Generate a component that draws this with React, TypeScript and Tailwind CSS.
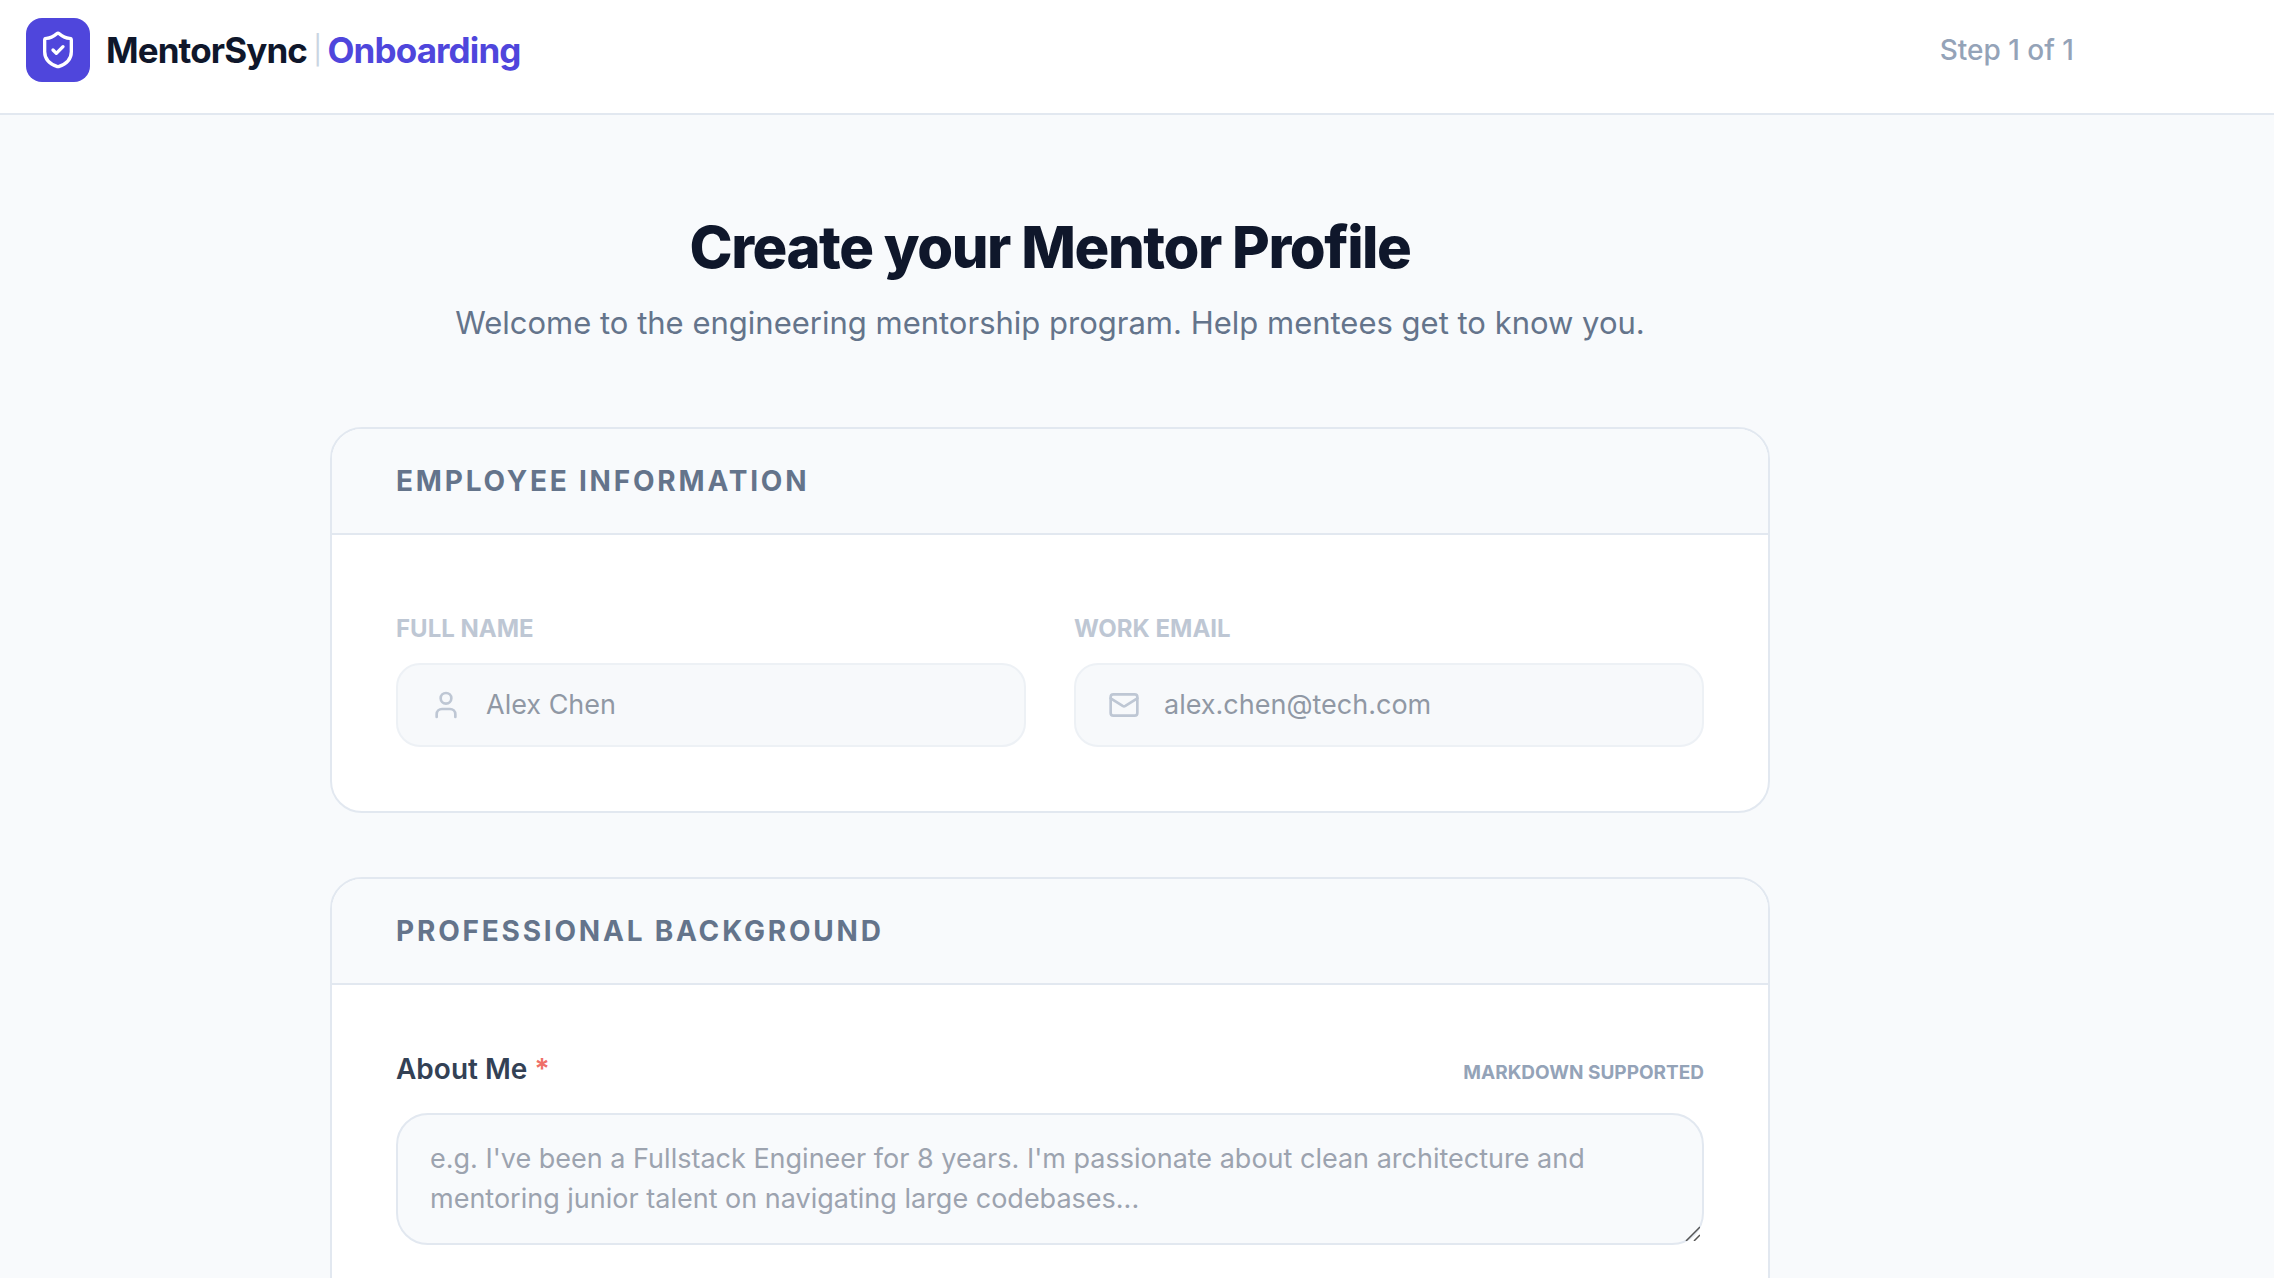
import type { ReactNode } from "react";
import { Mail, ShieldCheck, User } from "lucide-react";

function Section({ title, children }: { title: string; children: ReactNode }) {
  return (
    <section className="overflow-hidden rounded-[32px] border-2 border-slate-200 bg-white">
      <div className="border-b-2 border-slate-200 bg-slate-50 px-16 py-8">
        <h2 className="text-[28px] leading-10 font-bold tracking-widest text-[#64748b] uppercase">{title}</h2>
      </div>
      <div className="p-16">{children}</div>
    </section>
  );
}

function LockedField({ id, label, value, type, icon }: {
  id: string;
  label: string;
  value: string;
  type: string;
  icon: ReactNode;
}) {
  return (
    <div className="opacity-60">
      <label htmlFor={id} className="mb-3 block pt-2 text-2xl leading-11 font-bold text-[#94a3b8] uppercase">
        {label}
      </label>
      <div className="relative">
        <span className="pointer-events-none absolute inset-y-0 left-0 flex items-center pl-[34px] text-[#94a3b8]">
          {icon}
        </span>
        <input
          id={id}
          type={type}
          value={value}
          readOnly
          className="block w-full rounded-3xl border-2 border-slate-200 bg-slate-100/90 py-5 pr-8 pl-22 text-[27px] leading-10 text-[#475569]"
        />
      </div>
    </div>
  );
}

export default function App() {
  return (
    <div className="min-h-screen bg-slate-50 font-['Inter',sans-serif] text-slate-900">
      <header className="border-b-2 border-slate-200 bg-white pr-[174px]">
        <div className="mx-auto flex max-w-[2048px] items-center justify-between pt-[18px] pb-[31px]">
          <div className="flex items-center gap-4">
            <div className="flex size-16 items-center justify-center rounded-2xl bg-[#4f46dc] text-white">
              <ShieldCheck className="size-10" />
            </div>
            <div className="flex items-center gap-1.5 text-[35px] leading-12 font-bold tracking-tight">
              <span>MentorSync</span>
              <span className="text-[28px] font-normal text-slate-300">|</span>
              <span className="text-[#4f46dc]">Onboarding</span>
            </div>
          </div>
          <span className="text-[28px] leading-10 font-medium text-[#94a3b8]">Step 1 of 1</span>
        </div>
      </header>

      <main className="pr-[174px]">
        <div className="mx-auto max-w-[1440px] pt-24 pb-24">
          <div className="mb-20 text-center">
            <h1 className="mb-4 text-[58px] leading-[72px] font-extrabold tracking-tight">Create your Mentor Profile</h1>
            <p className="text-[31px] leading-12 text-[#64748b]">
              Welcome to the engineering mentorship program. Help mentees get to know you.
            </p>
          </div>

          <form className="space-y-16">
            <Section title="Employee Information">
              <div className="grid grid-cols-2 gap-12">
                <LockedField id="name" label="Full Name" type="text" value="Alex Chen" icon={<User className="size-8" />} />
                <LockedField id="email" label="Work Email" type="email" value="alex.chen@tech.com" icon={<Mail className="size-8" />} />
              </div>
            </Section>

            <Section title="Professional Background">
              <div className="mb-5 flex h-11 items-end justify-between">
                <label htmlFor="about" className="text-[28px] leading-12 font-semibold text-[#334155]">
                  About Me <span className="text-[#ef7068]">*</span>
                </label>
                <span className="text-[19px] leading-10 font-bold text-[#94a3b8] uppercase">Markdown supported</span>
              </div>
              <div className="relative">
                <textarea
                  id="about"
                  rows={2}
                  placeholder="e.g. I've been a Fullstack Engineer for 8 years. I'm passionate about clean architecture and mentoring junior talent on navigating large codebases..."
                  className="block w-full resize-none rounded-[32px] border-2 border-slate-200 bg-slate-50 px-8 py-6 text-[27px] leading-10 placeholder:text-[#9ca3af]"
                />
                {/* Resize grip */}
                <svg className="pointer-events-none absolute right-1 bottom-1 size-4" viewBox="0 0 16 16" fill="none" stroke="#555" strokeWidth={1.5}>
                  <path d="M2 16 16 2M10 16l6-6" />
                </svg>
              </div>
            </Section>
          </form>
        </div>
      </main>
    </div>
  );
}
